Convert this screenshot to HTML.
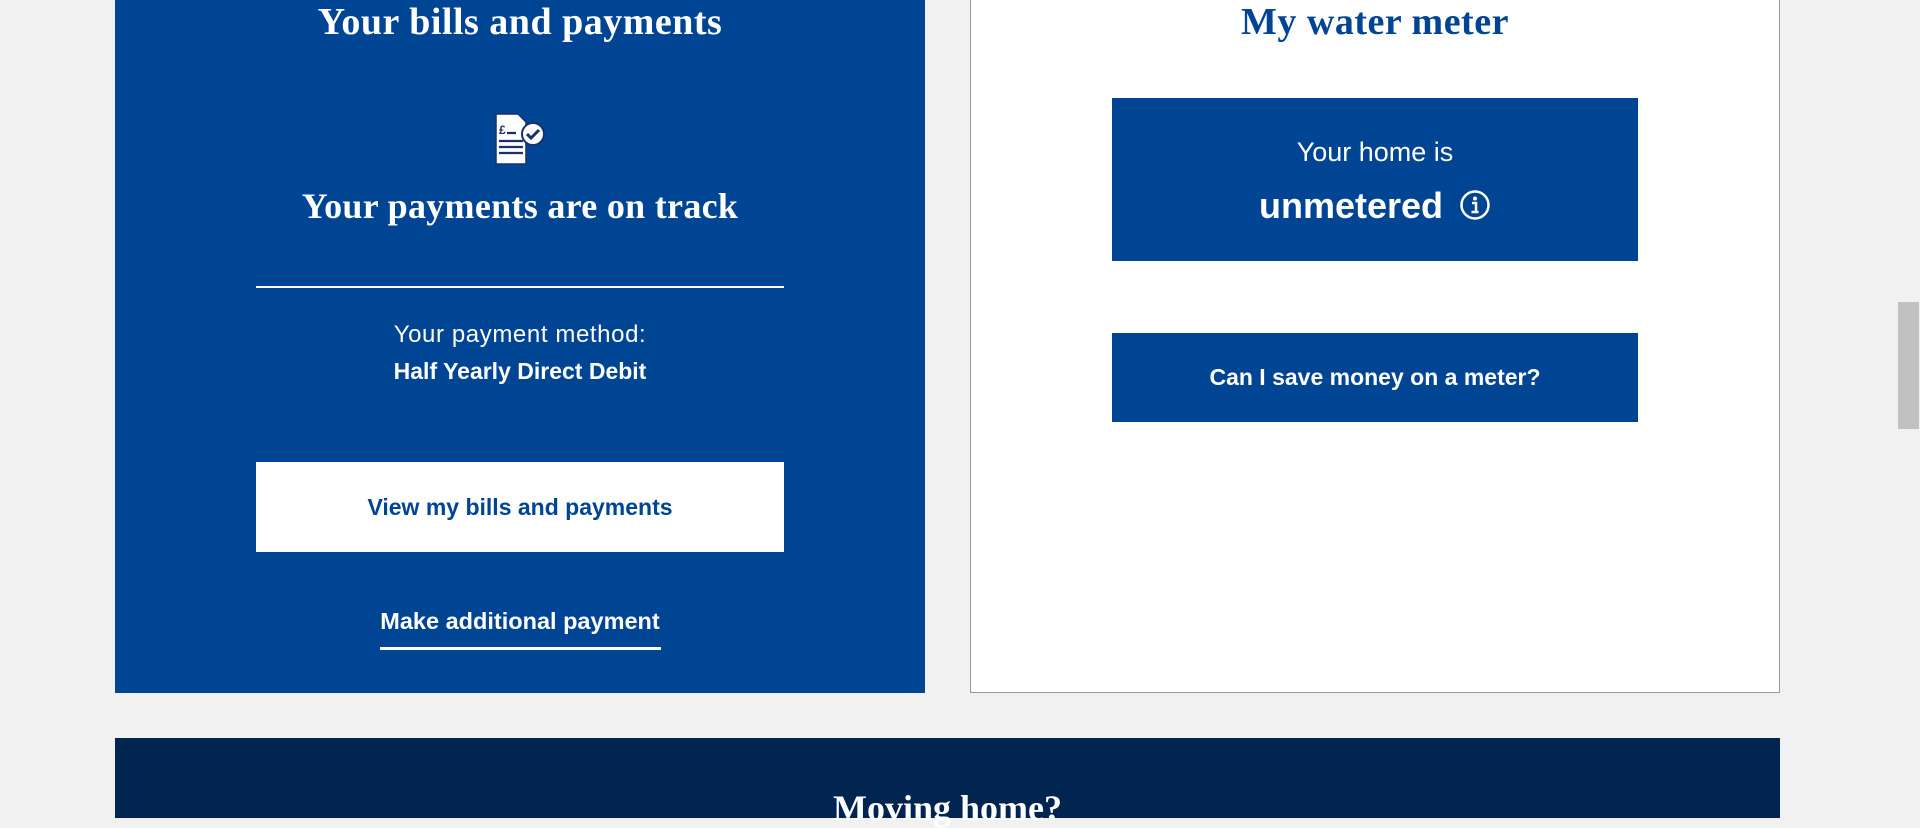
<!DOCTYPE html>
<html><head><style>
*{margin:0;padding:0;box-sizing:border-box}
body{width:1920px;height:812px;overflow:hidden;background:#f1f1f1;position:relative;font-family:"Liberation Sans",sans-serif}
.a{position:absolute}
.c{text-align:center;white-space:nowrap}
.serif{font-family:"Liberation Serif",serif;font-weight:bold}
</style></head><body>
<div class="a" style="left:115px;top:0;width:810px;height:693px;background:#004494"></div>
<div class="a" style="left:970px;top:0;width:810px;height:693px;background:#fff;border:1px solid #999;border-top:none"></div>
<div class="a c serif" style="left:115px;width:810px;top:2px;font-size:38px;letter-spacing:0.5px;color:#fff;line-height:40px">Your bills and payments</div>
<svg class="a" style="left:493px;top:112px" width="56" height="56" viewBox="0 0 56 56">
<path d="M3 2h22l8 8v42H3z" fill="#fff" stroke="#1a2f6e" stroke-width="1.5"/>
<text x="6" y="22" font-size="12" font-weight="bold" fill="#1a2f6e" font-family="Liberation Sans">£</text>
<path d="M14 21h9M6 29h24M6 35h24M6 41h24" stroke="#1a2f6e" stroke-width="2.2"/>
<circle cx="40" cy="22" r="11" fill="#fff" stroke="#1a2f6e" stroke-width="2"/>
<circle cx="40" cy="22" r="8.5" fill="none" stroke="#fff" stroke-width="1"/>
<path d="M34 22l4 4 8-8" fill="none" stroke="#1a2f6e" stroke-width="3"/>
</svg>
<div class="a c serif" style="left:115px;width:810px;top:186px;font-size:36px;letter-spacing:0.3px;color:#fff;line-height:40px">Your payments are on track</div>
<div class="a" style="left:256px;top:286px;width:528px;height:2px;background:#fff"></div>
<div class="a c" style="left:115px;width:810px;top:321px;font-size:24px;letter-spacing:0.6px;color:#fff">Your payment method:</div>
<div class="a c" style="left:115px;width:810px;top:358px;font-size:23px;color:#fff;font-weight:bold">Half Yearly Direct Debit</div>
<div class="a c" style="left:256px;top:462px;width:528px;height:90px;background:#fff;color:#004494;font-size:23px;font-weight:bold;line-height:90px">View my bills and payments</div>
<div class="a c" style="left:115px;width:810px;top:608px;font-size:23.5px;color:#fff;font-weight:bold">Make additional payment</div>
<div class="a" style="left:380px;top:647px;width:281px;height:3px;background:#fff"></div>
<div class="a c serif" style="left:970px;width:810px;top:2px;font-size:38px;letter-spacing:0.5px;color:#004494;line-height:40px">My water meter</div>
<div class="a" style="left:1112px;top:98px;width:526px;height:163px;background:#004494"></div>
<div class="a c" style="left:1112px;width:526px;top:137px;font-size:27px;color:#fff">Your home is</div>
<div class="a c" style="left:1112px;width:526px;top:185px;font-size:36px;color:#fff;font-weight:bold">unmetered <svg width="32" height="32" viewBox="0 0 32 32" style="vertical-align:-3px;margin-left:6px"><circle cx="16" cy="16" r="13.5" fill="none" stroke="#fff" stroke-width="2.5"/><circle cx="16" cy="9.5" r="2" fill="#fff"/><path d="M13 14h4v9M12.5 23h7" stroke="#fff" stroke-width="2.5" fill="none"/></svg></div>
<div class="a c" style="left:1112px;top:333px;width:526px;height:89px;background:#004494;color:#fff;font-size:23px;font-weight:bold;line-height:89px">Can I save money on a meter?</div>
<div class="a" style="left:115px;top:738px;width:1665px;height:80px;background:#012550"></div>
<div class="a c serif" style="left:115px;width:1665px;top:788px;font-size:36px;color:#fff;line-height:40px">Moving home?</div>
<div class="a" style="left:1897px;top:0;width:23px;height:812px;background:#f1f1f1"></div>
<div class="a" style="left:1898px;top:302px;width:21px;height:127px;background:#c1c1c1"></div>
</body></html>
